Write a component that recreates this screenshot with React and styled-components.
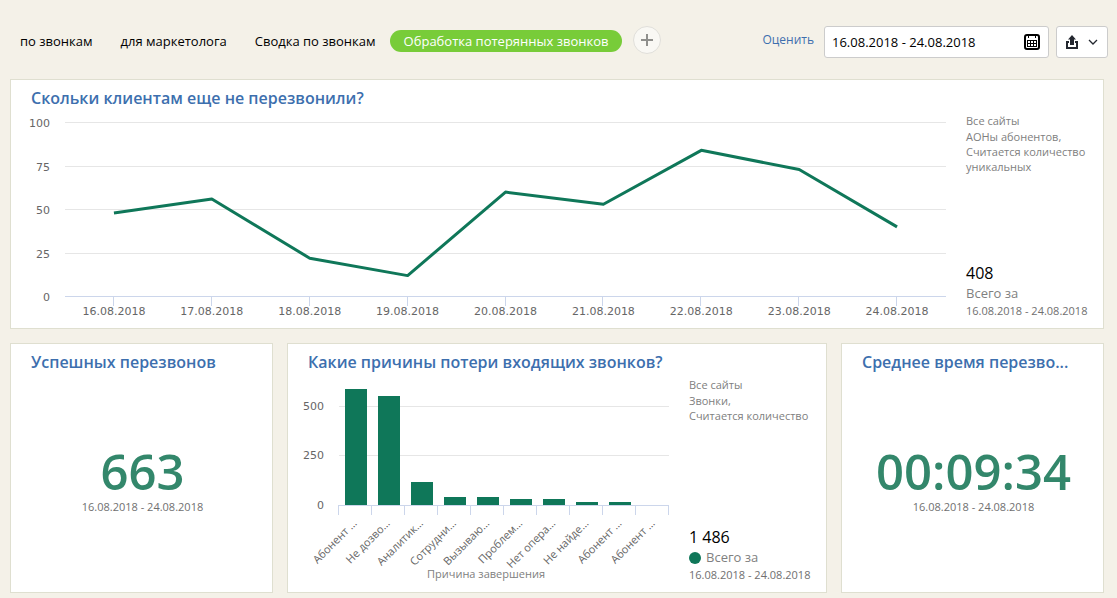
import React, { useLayoutEffect, useRef, useState } from "react";
import styled, { createGlobalStyle } from "styled-components";

const PERIOD = "16.08.2018 - 24.08.2018";
const GREEN = "#0f7759";

const tabs = [
  "по звонкам",
  "для маркетолога",
  "Сводка по звонкам",
  "Обработка потерянных звонков",
];

const missedByDay = [
  { label: "16.08.2018", value: 48 },
  { label: "17.08.2018", value: 56 },
  { label: "18.08.2018", value: 22 },
  { label: "19.08.2018", value: 12 },
  { label: "20.08.2018", value: 60 },
  { label: "21.08.2018", value: 53 },
  { label: "22.08.2018", value: 84 },
  { label: "23.08.2018", value: 73 },
  { label: "24.08.2018", value: 40 },
];

const lossReasons = [
  { label: "Абонент …", value: 586 },
  { label: "Не дозво…", value: 551 },
  { label: "Аналитик…", value: 116 },
  { label: "Сотрудни…", value: 41 },
  { label: "Вызываю…", value: 41 },
  { label: "Проблем…", value: 31 },
  { label: "Нет опера…", value: 31 },
  { label: "Не найде…", value: 16 },
  { label: "Абонент …", value: 16 },
  { label: "Абонент …", value: 0 },
];

function useWidth() {
  const ref = useRef(null);
  const [width, setWidth] = useState(0);

  useLayoutEffect(() => {
    const node = ref.current;
    const update = () => setWidth(node.clientWidth);
    update();
    const observer = new ResizeObserver(update);
    observer.observe(node);
    return () => observer.disconnect();
  }, []);

  return [ref, width];
}

// keeps 1px strokes crisp
const snap = (n) => Math.round(n) + 0.5;

function LineChart({ data }) {
  const [ref, width] = useWidth();
  const left = 54;
  const bottom = 183;
  const step = (width - left) / data.length;
  const x = (i) => left + (i + 0.5) * step;
  const y = (value) => bottom - value * 1.74;

  return (
    <ChartBox ref={ref}>
      {width > 0 && (
        <svg width={width} height="215" role="img" aria-label="Пропущенные по дням">
          {[0, 25, 50, 75, 100].map((value) => (
            <g key={value}>
              <GridLine
                $axis={value === 0}
                x1={left}
                x2={width}
                y1={snap(y(value))}
                y2={snap(y(value))}
              />
              <AxisLabel $wide x={left - 15} y={snap(y(value)) + 4} textAnchor="end">
                {value}
              </AxisLabel>
            </g>
          ))}
          {data.map((d, i) => (
            <g key={d.label}>
              <GridLine $axis x1={snap(x(i) - 1)} x2={snap(x(i) - 1)} y1={bottom} y2={bottom + 10} />
              <AxisLabel $wide x={x(i)} y={bottom + 19} textAnchor="middle">
                {d.label}
              </AxisLabel>
            </g>
          ))}
          <polyline
            points={data.map((d, i) => `${x(i)},${y(d.value) + 0.5}`).join(" ")}
            fill="none"
            stroke={GREEN}
            strokeWidth="3"
            strokeLinejoin="round"
          />
        </svg>
      )}
    </ChartBox>
  );
}

function BarChart({ data, caption }) {
  const [ref, width] = useWidth();
  const left = 50;
  const bottom = 128;
  const step = (width - left) / data.length;
  const y = (value) => bottom - value * 0.198;

  return (
    <ChartBox ref={ref}>
      {width > 0 && (
        <svg width={width} height="215" role="img" aria-label={caption}>
          {[250, 500].map((value) => (
            <GridLine
              key={value}
              x1={left + 1}
              x2={width}
              y1={Math.floor(y(value)) + 0.5}
              y2={Math.floor(y(value)) + 0.5}
            />
          ))}
          {[0, 250, 500].map((value) => (
            <AxisLabel
              $wide
              key={value}
              x={left - 14}
              y={Math.floor(y(value)) + 4}
              textAnchor="end"
            >
              {value}
            </AxisLabel>
          ))}
          {data.map((d, i) => {
            const top = Math.round(y(d.value));
            const center = left + (i + 0.5) * step;
            const tick = Math.floor(left + i * step) + 0.5;
            return (
              <g key={i}>
                <rect
                  x={Math.round(center - 10)}
                  y={top}
                  width="22"
                  height={bottom - top}
                  fill={GREEN}
                />
                <GridLine $axis x1={tick} x2={tick} y1={bottom} y2={bottom + 10} />
                <AxisLabel
                  textAnchor="end"
                  transform={`translate(${center + 3} ${bottom + 19}) rotate(-45)`}
                >
                  {d.label}
                </AxisLabel>
              </g>
            );
          })}
          <GridLine $axis x1={left} x2={width} y1={bottom + 0.5} y2={bottom + 0.5} />
          <GridLine $axis x1={width - 0.5} x2={width - 0.5} y1={bottom} y2={bottom + 10} />
          <AxisLabel $muted x={left + 148} y={bottom + 73} textAnchor="middle">
            {caption}
          </AxisLabel>
        </svg>
      )}
    </ChartBox>
  );
}

function Summary({ notes, total, dot }) {
  return (
    <Side>
      <div>
        <Site>Все сайты</Site>
        {notes.map((note) => (
          <Note key={note}>{note}</Note>
        ))}
      </div>
      <div>
        <Total>{total}</Total>
        <TotalLabel>
          {dot && <Dot />}
          Всего за
        </TotalLabel>
        <Period>{PERIOD}</Period>
      </div>
    </Side>
  );
}

function NumberPanel({ title, value }) {
  return (
    <Panel>
      <Title>{title}</Title>
      <NumberBody>
        <BigNumber>{value}</BigNumber>
        <Period>{PERIOD}</Period>
      </NumberBody>
    </Panel>
  );
}

function CalendarIcon() {
  return (
    <svg width="16" height="16" viewBox="0 0 16 16" aria-hidden="true">
      <rect x="1" y="1" width="14" height="14" rx="2" fill="#fff" stroke="#000" strokeWidth="2" />
      <path d="M4.5 1v3M11.5 1v3" stroke="#000" />
      <path d="M3 6.5h10M3 9.5h10M3 12.5h10M3.5 6v7M6.5 6v7M9.5 6v7M12.5 6v7" stroke="#000" />
    </svg>
  );
}

function ShareIcon() {
  return (
    <svg width="12" height="14" viewBox="0 0 12 14" aria-hidden="true" fill="#23272f">
      <path d="M6 0l4 4.5H8V10H4V4.5H2z" />
      <path d="M0 6h3v2H2v4h8V8H9V6h3v8H0z" />
    </svg>
  );
}

function App() {
  const [active, setActive] = useState(tabs[3]);
  const [period, setPeriod] = useState(PERIOD);

  return (
    <Page>
      <GlobalStyle />
      <Header>
        <Tabs>
          {tabs.map((tab) => (
            <Tab key={tab} type="button" $active={tab === active} onClick={() => setActive(tab)}>
              {tab}
            </Tab>
          ))}
        </Tabs>
        <AddButton type="button" aria-label="Добавить">
          <svg width="12" height="12" viewBox="0 0 12 12">
            <path d="M6 0v12M0 6h12" stroke="#8f8f8c" strokeWidth="2" />
          </svg>
        </AddButton>
        <RateLink href="#rate">Оценить</RateLink>
        <DateField>
          <input
            aria-label="Период"
            value={period}
            onChange={(e) => setPeriod(e.target.value)}
          />
          <CalendarIcon />
        </DateField>
        <ExportButton type="button" aria-label="Экспорт">
          <ShareIcon />
          <svg width="10" height="6" viewBox="0 0 10 6">
            <path d="M1 1l4 4 4-4" fill="none" stroke="#23272f" strokeWidth="1.3" />
          </svg>
        </ExportButton>
      </Header>

      <Board>
        <Panel $span={4}>
          <Title>Скольки клиентам еще не перезвонили?</Title>
          <Body>
            <LineChart data={missedByDay} />
            <Summary
              notes={["АОНы абонентов,", "Считается количество уникальных"]}
              total="408"
            />
          </Body>
        </Panel>
        <NumberPanel title="Успешных перезвонов" value="663" />
        <Panel $span={2}>
          <Title>Какие причины потери входящих звонков?</Title>
          <Body>
            <BarChart data={lossReasons} caption="Причина завершения" />
            <Summary notes={["Звонки,", "Считается количество"]} total="1 486" dot />
          </Body>
        </Panel>
        <NumberPanel title="Среднее время перезво..." value="00:09:34" />
      </Board>
    </Page>
  );
}

const GlobalStyle = createGlobalStyle`
  * {
    box-sizing: border-box;
  }
  body {
    margin: 0;
    background: #f4f1e8;
    font-family: "Open Sans", "Noto Sans", sans-serif;
    font-size: 13px;
    color: #000;
  }
  button,
  input {
    font: inherit;
  }
`;

const Page = styled.div`
  padding-top: 26px;
`;

const Header = styled.header`
  display: flex;
  align-items: flex-start;
  padding: 0 9px 0 6px;
`;

const Tabs = styled.nav`
  display: flex;
  padding-top: 4px;
`;

const Tab = styled.button`
  height: 22px;
  padding: 0 14px;
  border: none;
  border-radius: 11px;
  background: ${(p) => (p.$active ? "#78cc39" : "transparent")};
  color: ${(p) => (p.$active ? "#fff" : "#000")};
  line-height: 20px;
  white-space: nowrap;
  cursor: pointer;
`;

const AddButton = styled.button`
  display: flex;
  align-items: center;
  justify-content: center;
  width: 28px;
  height: 28px;
  margin-left: 11px;
  padding: 0;
  border: 1px solid #e0dfda;
  border-radius: 50%;
  background: #f9f8f4;
  cursor: pointer;
`;

const RateLink = styled.a`
  margin-left: auto;
  color: #3d6fae;
  font-size: 12px;
  line-height: 28px;
  text-decoration: none;
`;

const DateField = styled.label`
  display: flex;
  align-items: center;
  width: 225px;
  height: 32px;
  margin: 0 7px 0 10px;
  padding: 0 8px 0 7px;
  border: 1px solid #ccc;
  border-radius: 3px;
  background: #fff;

  input {
    flex: 1;
    min-width: 0;
    padding: 0;
    border: none;
    outline: none;
    background: none;
  }
`;

const ExportButton = styled.button`
  display: flex;
  align-items: center;
  justify-content: space-between;
  width: 52px;
  height: 32px;
  padding: 0 9px;
  border: 1px solid #ccc;
  border-radius: 3px;
  background: #fff;
  cursor: pointer;
`;

const Board = styled.main`
  display: grid;
  grid-template-columns: repeat(4, minmax(0, 1fr));
  gap: 14px;
  padding: 21px 13px 5px 10px;
`;

const Panel = styled.section`
  display: flex;
  flex-direction: column;
  grid-column: span ${(p) => p.$span || 1};
  border: 1px solid #dfdfd0;
  background: #fff;
`;

const Title = styled.h2`
  margin: 0;
  padding: 6px 20px 3px;
  color: #3d6fae;
  font-size: 16px;
  font-weight: 600;
  line-height: 24px;
  white-space: nowrap;
  overflow: hidden;
  text-overflow: ellipsis;
`;

const Body = styled.div`
  display: flex;
  flex: 1;
`;

const ChartBox = styled.div`
  flex: 1;
  min-width: 0;
  height: 215px;

  svg {
    display: block;
  }
`;

const GridLine = styled.line`
  stroke: ${(p) => (p.$axis ? "#ccd6eb" : "#e6e6e6")};
`;

const AxisLabel = styled.text`
  fill: ${(p) => (p.$muted ? "#808080" : "#666")};
  font-size: 11px;
  ${(p) => p.$wide && `font-family: "DejaVu Sans", sans-serif;`}
`;

const Side = styled.aside`
  display: flex;
  flex-direction: column;
  justify-content: space-between;
  width: 157px;
  padding: 0 14px 9px 20px;
`;

const Note = styled.p`
  margin: 0;
  color: #808080;
  font-size: 11px;
  line-height: 15px;
`;

const Site = styled(Note)`
  margin-bottom: 1px;
`;

const Total = styled.div`
  font-size: 16px;
  line-height: 22px;
`;

const TotalLabel = styled.div`
  display: flex;
  align-items: center;
  gap: 5px;
  color: #808080;
  line-height: 19px;
`;

const Dot = styled.span`
  width: 12px;
  height: 12px;
  border-radius: 50%;
  background: ${GREEN};
`;

const Period = styled.div`
  color: #707070;
  font-size: 11px;
  line-height: 16px;
  white-space: nowrap;
`;

const NumberBody = styled.div`
  display: flex;
  flex: 1;
  flex-direction: column;
  align-items: center;
  justify-content: center;
  padding: 0 0 12px 2px;
`;

const BigNumber = styled.div`
  color: #33876b;
  font-size: 49px;
  font-weight: 600;
  line-height: 56px;
`;

export default App;
